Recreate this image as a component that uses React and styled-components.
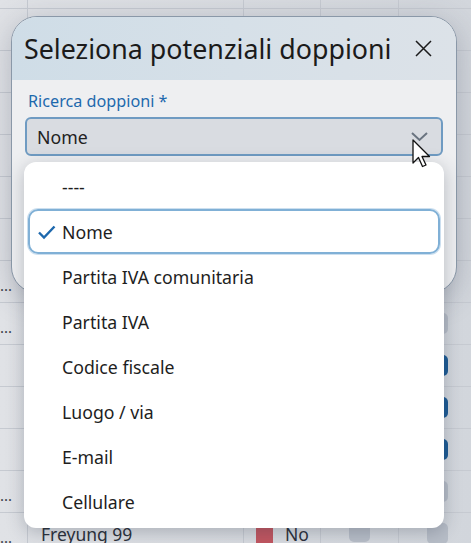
import React from "react";
import styled, { createGlobalStyle } from "styled-components";

const Global = createGlobalStyle`
  html, body { margin: 0; padding: 0; }
  body {
    width: 471px; height: 543px; overflow: hidden;
    font-family: "Noto Sans", "Open Sans", sans-serif;
    background: #dcdfe3;
  }
`;

const Page = styled.div`
  position: relative;
  width: 471px;
  height: 543px;
  overflow: hidden;
  background: linear-gradient(90deg, #e0e2e6 0%, #d8dbe0 60%, #d2d6dc 100%);
`;

const Table = styled.div`
  display: flex;
  flex-direction: column;
  margin-top: -33px;
`;

const Row = styled.div`
  display: grid;
  grid-template-columns: 27px 216px 77px 78px 1fr;
  height: 42px;
  border-bottom: 1px solid #c6cad1;
  box-sizing: border-box;
`;

const Cell = styled.div`
  border-left: ${(p) => (p.$first ? "none" : "1px solid #c6cad1")};
  display: flex;
  align-items: flex-start;
  padding-left: ${(p) => p.$pl || 0}px;
  padding-top: ${(p) => p.$pt || 0}px;
  box-sizing: border-box;
  color: #2b303a;
  font-size: 17.5px;
  overflow: hidden;
  white-space: nowrap;
`;

const Dots = styled.span`
  font-size: 15px;
  color: #3a3f48;
  margin-top: 14px;
`;

const Check = styled.span`
  display: inline-block;
  width: 21px;
  height: 21px;
  border-radius: 5px;
  background: ${(p) => (p.$on ? "#1c5a94" : "#b8bec8")};
`;

const Flag = styled.span`
  display: inline-block;
  width: 17px;
  height: 26px;
  background: #c25660;
  margin-right: 12px;
  margin-top: 10px;
`;

const FlagText = styled.span`
  margin-top: 9px;
`;

const Dialog = styled.div`
  position: absolute;
  left: 11px;
  top: 16px;
  width: 446px;
  height: 277px;
  border-radius: 26px;
  border: 1px solid #8a98a8;
  box-sizing: border-box;
  overflow: hidden;
  background: #eeeff1;
  box-shadow: 0 6px 30px rgba(60, 70, 90, 0.28);
  display: flex;
  flex-direction: column;
`;

const Header = styled.div`
  height: 63px;
  flex: none;
  background: linear-gradient(90deg, #cfdde7 0%, #d6e0e8 50%, #dce2e8 100%);
  display: flex;
  align-items: center;
  justify-content: space-between;
  padding: 0 24px 0 12px;
`;

const Title = styled.h1`
  margin: 0;
  font-weight: 400;
  font-size: 26.8px;
  color: #1b1b1b;
`;

const Close = styled.button`
  border: none;
  background: none;
  padding: 0;
  width: 18px;
  height: 18px;
  display: flex;
  align-items: center;
  justify-content: center;
`;

const Body = styled.div`
  padding: 10px 13px 0 13px;
  display: flex;
  flex-direction: column;
  gap: 5px;
`;

const Label = styled.label`
  color: #1d69ad;
  font-size: 16.2px;
  padding-left: 3px;
`;

const Select = styled.div`
  height: 39px;
  box-sizing: border-box;
  border: 2px solid #6f9bc2;
  border-radius: 6px;
  background: #d9dce1;
  display: flex;
  align-items: center;
  justify-content: space-between;
  padding: 0 13px 0 10px;
  font-size: 17.7px;
  color: #222;
`;

const Menu = styled.ul`
  position: absolute;
  left: 24px;
  top: 162px;
  width: 420px;
  margin: 0;
  padding: 2px 4px 4px 4px;
  box-sizing: border-box;
  list-style: none;
  background: #fff;
  border-radius: 12px;
  box-shadow: 0 4px 18px rgba(40, 50, 70, 0.28);
`;

const Item = styled.li`
  height: 45px;
  box-sizing: border-box;
  display: flex;
  align-items: center;
  padding-left: ${(p) => (p.$selected ? 7 : 34)}px;
  font-size: 17.7px;
  color: #1e1e1e;
  border-radius: 10px;
  border: ${(p) => (p.$selected ? "2px solid #80b0d6" : "none")};
  box-shadow: ${(p) => (p.$selected ? "0 0 0 1px rgba(128,176,214,0.4)" : "none")};
  gap: 5px;
`;

const Cursor = styled.svg`
  position: absolute;
  left: 411px;
  top: 139px;
`;

const items = [
  "----",
  "Nome",
  "Partita IVA comunitaria",
  "Partita IVA",
  "Codice fiscale",
  "Luogo / via",
  "E-mail",
  "Cellulare",
];

const rows = [
  {}, {}, {}, {}, {}, {}, {},
  { dots: true },
  { dots: true, c4: false },
  { c4: true },
  { c4: true },
  { c4: true },
  { dots: true, c4: false },
  { dots: true, name: "Freyung 99", flag: true, c3: false, c4: false },
];

export default function App() {
  return (
    <Page>
      <Global />
      <Table>
        {rows.map((r, i) => (
          <Row key={i}>
            <Cell $first>{r.dots && <Dots>...</Dots>}</Cell>
            <Cell $pl={13} $pt={9}>{r.name}</Cell>
            <Cell $pl={12}>
              {r.flag && (
                <>
                  <Flag />
                  <FlagText>No</FlagText>
                </>
              )}
            </Cell>
            <Cell $pl={28} $pt={8}>
              {r.c3 !== undefined && <Check $on={r.c3} />}
            </Cell>
            <Cell $pl={28} $pt={10}>
              {r.c4 !== undefined && <Check $on={r.c4} />}
            </Cell>
          </Row>
        ))}
      </Table>

      <Dialog>
        <Header>
          <Title>Seleziona potenziali doppioni</Title>
          <Close aria-label="Chiudi">
            <svg width="17" height="17" viewBox="0 0 17 17">
              <path d="M1 1 L16 16 M16 1 L1 16" stroke="#1b1b1b" strokeWidth="1.5" />
            </svg>
          </Close>
        </Header>
        <Body>
          <Label>Ricerca doppioni *</Label>
          <Select>
            <span>Nome</span>
            <svg width="17" height="10" viewBox="0 0 17 10">
              <path d="M1 1 L8.5 8 L16 1" fill="none" stroke="#6a7480" strokeWidth="2" />
            </svg>
          </Select>
        </Body>
      </Dialog>

      <Menu>
        {items.map((t, i) => (
          <Item key={t} $selected={i === 1}>
            {i === 1 && (
              <svg width="20" height="16" viewBox="0 0 20 16">
                <path d="M2 8.5 L7 13.5 L17.5 2.5" fill="none" stroke="#1d68ad" strokeWidth="2.4" />
              </svg>
            )}
            <span>{t}</span>
          </Item>
        ))}
      </Menu>

      <Cursor width="22" height="30" viewBox="0 0 22 30">
        <path
          d="M2 1 L2 24 L7.5 18.5 L11.5 27.5 L15 26 L11 17.5 L18.5 17.5 Z"
          fill="#fff"
          stroke="#111"
          strokeWidth="1.3"
          strokeLinejoin="round"
        />
      </Cursor>
    </Page>
  );
}
